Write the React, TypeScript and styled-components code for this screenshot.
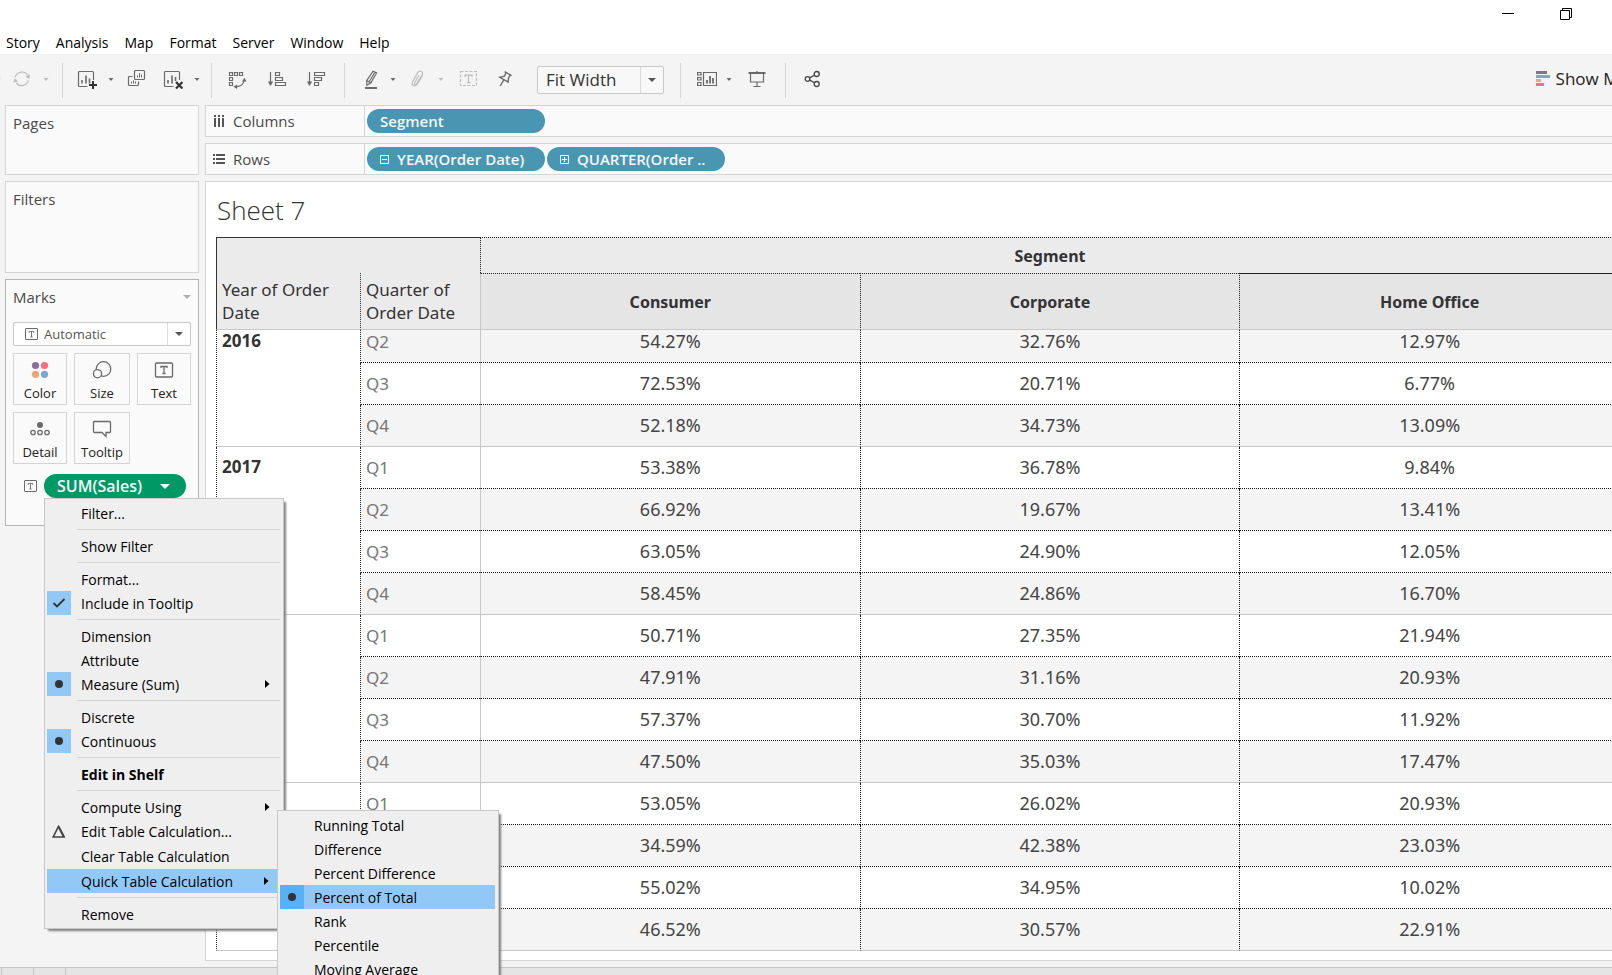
import React from 'react';
import styled, { createGlobalStyle, css } from 'styled-components';

const GlobalStyle = createGlobalStyle`
  *, *::before, *::after { box-sizing: border-box; }
  body { margin: 0; background: #f4f4f4; }
  button, select { font: inherit; color: inherit; }
  button { padding: 0; border: 0; background: none; cursor: default; }
`;

const line = '#d4d4d4';
const ink = '#6a6a6a';

const Shell = styled.div`
  display: flex;
  flex-direction: column;
  height: 100vh;
  overflow: hidden;
  background: #f4f4f4;
  font-family: 'Open Sans', 'Noto Sans', sans-serif;
  font-size: 14px;
  color: #000;
`;

/* ---------- window chrome ---------- */

const TitleBar = styled.header`
  display: flex;
  justify-content: flex-end;
  height: 30px;
  padding-right: 17px;
  background: #fff;
`;

const WindowButton = styled.button`
  display: grid;
  place-items: center;
  width: 58px;
  height: 28px;
`;

const MenuBar = styled.nav`
  display: flex;
  gap: 16px;
  height: 24px;
  padding-left: 6px;
  background: #fff;
  line-height: 26px;
`;

const MenuBarItem = styled.button`
  white-space: nowrap;
`;

/* ---------- toolbar ---------- */

const Toolbar = styled.div`
  display: flex;
  align-items: center;
  height: 51px;
  border-top: 1px solid #f0f0f0;
`;

const Tool = styled.button<{ $lead?: number; $muted?: boolean }>`
  flex: none;
  height: 20px;
  margin-bottom: 2px;
  margin-left: ${(p) => p.$lead ?? 16}px;
  color: ${(p) => (p.$muted ? '#bdbdbd' : ink)};
  svg { display: block; }
`;

const Divider = styled.span<{ $lead?: number }>`
  flex: none;
  width: 1px;
  height: 35px;
  margin-left: ${(p) => p.$lead ?? 18}px;
  background: ${line};
`;

const SelectBox = styled.span<{ $size: 'large' | 'small' }>`
  position: relative;
  display: flex;
  flex: none;
  align-items: center;
  border: 1px solid #c8c8c8;
  border-radius: 2px;
  ${(p) =>
    p.$size === 'large'
      ? css`
          width: 127px;
          height: 28px;
          margin-left: 22px;
          background: #f8f8f8;
          font-size: 17px;
          color: #333;
          select { padding: 0 0 2px 8px; }
        `
      : css`
          height: 24px;
          background: #fff;
          font-size: 13px;
          color: #555;
          select { padding-left: 30px; }
        `}
`;

const Select = styled.select`
  width: 100%;
  height: 100%;
  border: 0;
  outline: 0;
  background: transparent;
  appearance: none;
`;

const SelectArrow = styled.span`
  position: absolute;
  top: 0;
  right: 0;
  bottom: 0;
  display: grid;
  place-items: center;
  width: 23px;
  border-left: 1px solid #dcdcdc;
  color: #555;
  pointer-events: none;
`;

const SelectIcon = styled.span`
  position: absolute;
  left: 11px;
  display: grid;
  color: ${ink};
  pointer-events: none;
`;

const ShowMe = styled.button`
  display: flex;
  flex: none;
  align-items: center;
  gap: 6px;
  margin-bottom: 3px;
  margin-left: auto;
  margin-right: -16px;
  font-size: 17px;
  color: #222;
`;

/* ---------- workspace ---------- */

const Workspace = styled.div`
  display: flex;
  flex: 1;
  gap: 6px;
  min-height: 0;
  padding: 0 0 6px 5px;
`;

const Sidebar = styled.aside`
  display: flex;
  flex: none;
  flex-direction: column;
  gap: 6px;
  width: 194px;
`;

const Card = styled.section<{ $height: number; $strong?: boolean }>`
  min-height: ${(p) => p.$height}px;
  padding: 5px 7px 0;
  border: 1px solid ${(p) => (p.$strong ? '#b4b4b4' : line)};
  background: #fafafa;
`;

const CardTitle = styled.h2`
  display: flex;
  align-items: center;
  justify-content: space-between;
  margin: 0;
  font-size: 15px;
  font-weight: 400;
  line-height: 24px;
  color: #4a4a4a;
`;

const CardMenuButton = styled.button`
  padding: 8px;
  margin-right: -8px;
  color: #b0b0b0;
  svg { display: block; }
`;

const MarkControls = styled.div`
  display: flex;
  flex-direction: column;
  gap: 7px;
  margin-top: 13px;
`;

const MarkGrid = styled.div`
  display: grid;
  grid-template-columns: 54fr 56fr 54fr;
  gap: 7px;
`;

const MarkButton = styled.button`
  display: flex;
  flex-direction: column;
  align-items: center;
  height: 52px;
  padding-top: 6px;
  border: 1px solid ${line};
  background: #fafafa;
  font-size: 13px;
  line-height: 26px;
  color: #222;
  svg { flex: none; }
`;

const MarkShelf = styled.div`
  display: flex;
  align-items: center;
  gap: 7px;
  margin-top: 10px;
  padding-left: 11px;
  color: ${ink};
`;

const MarkPillSlot = styled.div`
  position: relative;
`;

const Pill = styled.button<{ $measure?: boolean }>`
  display: flex;
  align-items: center;
  gap: 8px;
  width: ${(p) => (p.$measure ? 142 : 178)}px;
  height: 24px;
  padding: 0 16px 0 13px;
  border-radius: 12px;
  background: ${(p) => (p.$measure ? '#009966' : '#4996b2')};
  font-size: ${(p) => (p.$measure ? 16 : 15)}px;
  font-weight: 600;
  line-height: 24px;
  white-space: nowrap;
  color: #f4f8fa;
  ${(p) => p.$measure && 'justify-content: space-between;'}
  svg { flex: none; }
`;

const Main = styled.main`
  display: flex;
  flex: 1;
  flex-direction: column;
  gap: 6px;
  min-width: 0;
`;

const Shelf = styled.section`
  display: flex;
  height: 32px;
  flex: none;
  border: 1px solid ${line};
  border-right: 0;
  background: #fafafa;
`;

const ShelfLabel = styled.h2`
  display: flex;
  align-items: center;
  gap: 8px;
  width: 159px;
  margin: 0;
  padding-left: 7px;
  border-right: 1px solid ${line};
  font-size: 15px;
  font-weight: 400;
  color: #4a4a4a;
`;

const PillRow = styled.div`
  display: flex;
  align-items: center;
  gap: 2px;
  padding-left: 2px;
`;

const Sheet = styled.section`
  flex: 1;
  overflow: hidden;
  padding-left: 10px;
  border: 1px solid ${line};
  border-right: 0;
  background: #fff;
`;

const SheetTitle = styled.h1`
  margin: 0;
  padding: 2px 0 0 1px;
  font-size: 26px;
  font-weight: 300;
  line-height: 53px;
  color: #333;
`;

/* ---------- crosstab ---------- */

const Crosstab = styled.table`
  width: calc(100% + 7px);
  border-spacing: 0;
  table-layout: fixed;
  font-family: 'Noto Sans', 'Open Sans', sans-serif;
  font-size: 17px;
  line-height: 23px;
  color: #333;
  th, td { padding: 0 5px; }
`;

const Col = styled.col<{ $width?: number }>`
  ${(p) => p.$width && `width: ${p.$width}px;`}
`;

const CornerTop = styled.td`
  height: 36px;
  border-top: 1px solid #333;
  border-left: 1px solid #333;
  background: #ebebeb;
`;

const SpanHead = styled.th`
  border-top: 1px dotted #222;
  border-left: 1px dotted #222;
  background: #ebebeb;
  font-size: 16px;
  && { padding-top: 2px; }
`;

const FieldHead = styled.th<{ $edge: 'solid' | 'dotted' }>`
  height: 57px;
  border-left: 1px ${(p) => p.$edge} #333;
  border-bottom: 1px solid #c8c8c8;
  background: #ebebeb;
  font-weight: 400;
  text-align: left;
  vertical-align: bottom;
  && { padding-bottom: 5px; }
`;

const MemberHead = styled.th<{ $first?: boolean; $last?: boolean }>`
  border-top: 1px ${(p) => (p.$last ? 'solid' : 'dotted')} #222;
  border-left: 1px ${(p) => (p.$first ? 'solid #c8c8c8' : 'dotted #222')};
  border-bottom: 1px solid #c8c8c8;
  background: #e5e5e5;
  font-size: 16px;
  && { padding-top: 2px; }
`;

const YearHead = styled.th<{ $clipped?: boolean }>`
  border-left: 1px dotted #222;
  border-bottom: 1px solid #c8c8c8;
  line-height: 21px;
  text-align: left;
  vertical-align: top;
  && { padding-top: ${(p) => (p.$clipped ? 0 : 9)}px; }
`;

const DataRow = styled.tr<{ $clipped?: boolean; $shaded?: boolean; $end?: boolean }>`
  height: ${(p) => (p.$clipped ? 33 : 42)}px;
  --shade: ${(p) => (p.$shaded ? '#f4f4f4' : '#fff')};
  --rule: ${(p) => (p.$end ? 'solid #c8c8c8' : 'dotted #111')};
  --lift: ${(p) => (p.$clipped ? 9 : 0)}px;
`;

const QuarterHead = styled.th`
  border-left: 1px dotted #222;
  border-bottom: 1px var(--rule);
  background: var(--shade);
  font-weight: 400;
  text-align: left;
  color: #757575;
  && { padding-bottom: var(--lift); }
`;

const Value = styled.td<{ $first?: boolean }>`
  border-left: 1px ${(p) => (p.$first ? 'solid #c8c8c8' : 'dotted #111')};
  border-bottom: 1px var(--rule);
  background: var(--shade);
  font-size: 18px;
  text-align: center;
  color: #444;
  && { padding-bottom: var(--lift); }
`;

/* ---------- context menus ---------- */

const Menu = styled.div<{ $nested?: boolean }>`
  position: absolute;
  z-index: ${(p) => (p.$nested ? 2 : 1)};
  top: ${(p) => (p.$nested ? '-59px' : '100%')};
  left: ${(p) => (p.$nested ? '230px' : '0')};
  width: ${(p) => (p.$nested ? 222 : 240)}px;
  padding: 2px;
  border: 1px solid #c8c8c8;
  background: #efefef;
  box-shadow: 3px 3px 2px -1px #808080;
  color: #000;
`;

const MenuItem = styled.div<{ $active?: boolean; $tall?: boolean; $strong?: boolean }>`
  position: relative;
  margin-right: ${(p) => (p.$active ? 1 : 0)}px;
  background: ${(p) => (p.$active ? '#91c8f6' : 'transparent')};
  > button {
    display: grid;
    grid-template-columns: 24px 1fr 16px;
    column-gap: 10px;
    align-items: center;
    width: 100%;
    height: ${(p) => (p.$tall ? 25 : 24)}px;
    text-align: left;
    white-space: nowrap;
    font-weight: ${(p) => (p.$strong ? 700 : 400)};
  }
`;

const Mark = styled.span<{ $tint?: 'on' | 'active' }>`
  display: grid;
  place-items: center;
  height: 24px;
  background: ${(p) => (p.$tint === 'active' ? '#56b0fa' : p.$tint === 'on' ? '#91c8f6' : 'transparent')};
  color: #333;
`;

const Separator = styled.hr`
  height: 1px;
  margin: 4px 1px 4px 30px;
  border: 0;
  background: ${line};
`;

/* ---------- status strip ---------- */

const TabStrip = styled.footer`
  display: flex;
  flex: none;
  height: 8px;
  padding-left: 1px;
  border-top: 1px solid #c4c4c4;
  background: #e5e5e5;
`;

const TabStub = styled.span`
  width: 32px;
  border-left: 1px solid #c4c4c4;
  &:last-child { width: 1px; }
`;

/* ---------- icons ---------- */

const Icon = ({ size = 20, children }: { size?: number; children: React.ReactNode }) => (
  <svg width={size} height={size} viewBox={`0 0 ${size} ${size}`} fill="none" stroke="currentColor" strokeWidth="1.2" aria-hidden="true">
    {children}
  </svg>
);

const Caret = ({ width = 8 }: { width?: number }) => (
  <svg width={width} height={width / 2} viewBox="0 0 8 4" fill="currentColor" aria-hidden="true">
    <path d="M0 0h8L4 4z" />
  </svg>
);

const ToolCaret = () => (
  <svg width="8" height="20" viewBox="0 0 8 20" fill="currentColor" aria-hidden="true">
    <path d="M1.500 9h5L4 12z" />
  </svg>
);

const SubmenuArrow = () => (
  <svg width="5" height="8" viewBox="0 0 5 8" aria-hidden="true">
    <path d="M0 0l4.500 4L0 8z" />
  </svg>
);

const Dot = () => (
  <svg width="8" height="8" viewBox="0 0 8 8" fill="#333" aria-hidden="true">
    <circle cx="4" cy="4" r="4" />
  </svg>
);

const Check = () => (
  <svg width="14" height="10" viewBox="0 0 14 10" fill="none" stroke="#333" strokeWidth="1.8" aria-hidden="true">
    <path d="M1.500 5l3.500 3.500L12.500 1" />
  </svg>
);

const Delta = () => (
  <svg width="14" height="14" viewBox="0 0 14 14" fill="none" stroke="#444" strokeWidth="1.6" aria-hidden="true">
    <path d="M6.500 1.500L12 12H1.200z" />
    <path d="M6.500 1.500L12 12" strokeWidth="2" />
  </svg>
);

const TextBox = () => (
  <svg width="13" height="12" viewBox="0 0 13 12" fill="none" stroke="currentColor" aria-hidden="true">
    <rect x=".5" y=".5" width="12" height="11" rx=".5" />
    <path d="M4.300 4.800V3.400h4.400v1.400M6.500 3.400V9M5.400 9h2.200" strokeWidth=".9" />
  </svg>
);

const Toggle = ({ plus }: { plus?: boolean }) => (
  <svg width="9" height="9" viewBox="0 0 9 9" fill="none" stroke="#fff" aria-hidden="true">
    <path d={plus ? 'M.5 .5h8v8h-8zM2 4.500h5M4.500 2v5' : 'M.5 .5h8v8h-8zM2 4.500h5'} />
  </svg>
);

const icons = {
  refresh: (
    <Icon>
      <path d="M3.200 8.200A7 7 0 0 1 15.800 6.200M16.400 11.400A7 7 0 0 1 4.200 14" />
      <path d="M17.800 5.200l-.4 4.800-4-2.400zM1.200 13.600l1.600-4.400 3.400 3.200z" fill="currentColor" stroke="none" />
    </Icon>
  ),
  newSheet: (
    <Icon>
      <path d="M10.500 17.500H2.500a1 1 0 0 1-1-1v-13a1 1 0 0 1 1-1h13a1 1 0 0 1 1 1V11" />
      <path d="M5 11v3.500M9 6.500v8M12.500 9.500v5" strokeWidth="1.6" />
      <path d="M16 12v8M12 16h8" stroke="#333" strokeWidth="2" />
    </Icon>
  ),
  duplicate: (
    <Icon>
      <rect x="7.500" y="1.500" width="10" height="9" rx="1" />
      <path d="M5.500 7.500h-3a1 1 0 0 0-1 1v7a1 1 0 0 0 1 1h8a1 1 0 0 0 1-1v-3" />
      <path d="M10.500 6.500v2M12.500 4v4.500M14.500 5.500v3M4.500 12.500v2M6.500 11.500v3M8.500 12.500v2" strokeWidth="1" />
    </Icon>
  ),
  clearSheet: (
    <Icon>
      <path d="M10.500 17.500H2.500a1 1 0 0 1-1-1v-13a1 1 0 0 1 1-1h13a1 1 0 0 1 1 1V11" />
      <path d="M5 11v3.500M9 6.500v8M12.500 8v4" strokeWidth="1.6" />
      <path d="M13 13l6.500 6.500M19.500 13L13 19.500" stroke="#333" strokeWidth="2.200" />
    </Icon>
  ),
  swap: (
    <Icon>
      <path d="M1.500 3.500h3v3h-3zM6.500 3.500h3v3h-3zM11.500 3.500h3v3h-3zM1.500 8.500h3v3h-3zM1.500 13.500h3v3h-3zM16 12c-.6 3-3.500 5.200-7 5.700" />
      <path d="M16.300 8.800l2.300 3.600h-4.600zM5.500 17.800l3.600-2.400v4.600z" fill="currentColor" stroke="none" />
    </Icon>
  ),
  sortUp: (
    <Icon>
      <path d="M3.500 3v11M8.500 3.500h4v3h-4zM8.500 8.500h7v3h-7zM8.500 13.500h10v3h-10z" />
      <path d="M.8 12.500h5.400L3.500 17z" fill="currentColor" stroke="none" />
    </Icon>
  ),
  sortDown: (
    <Icon>
      <path d="M3.500 3v11M8.500 3.500h10v3h-10zM8.500 8.500h7v3h-7zM8.500 13.500h4v3h-4z" />
      <path d="M.8 12.500h5.400L3.500 17z" fill="currentColor" stroke="none" />
    </Icon>
  ),
  highlight: (
    <Icon>
      <path d="M12 2.200l3.600 1.600L9.800 14l-3.900 2.200-.3-4.500zM5.800 11.600L9.800 14M13.800 3.200L8 13" />
      <path d="M4 19h12" strokeWidth="2" />
    </Icon>
  ),
  clip: (
    <Icon>
      <path d="M12 6l-4.500 8.200c-.8 1.600 1 2.500 1.800 1.100L15 6.400c1.200-2.200.3-3.600-.9-4.100-1.300-.5-2.700 0-3.500 1.500L5.800 12.400c-1 2-.5 3.700.6 4.300" />
      <path d="M6.400 16.700c1.600.8 3-.2 4-1.800l5.300-8.700" />
    </Icon>
  ),
  label: (
    <Icon>
      <rect x="1.500" y="2.500" width="16" height="14" strokeDasharray="3 1.500" />
      <path d="M6 8V6.200h7V8M9.500 6.200v7.500M7.700 13.700h3.600" />
    </Icon>
  ),
  pin: (
    <Icon>
      <path d="M9.600 2.600l7 4M11 3.600L9.500 7.200 4.800 8.300l8.400 4.900.3-4.200 2-3.200M8.800 10.800l-3.600 6.200" strokeWidth="1.400" />
    </Icon>
  ),
  cards: (
    <Icon>
      <path d="M.6 3.500h3.400v2.500H.6zM.6 8.500h3.400v2.500H.6zM.6 13.500h3.400v3H.6zM6.500 3.500h13v13h-13z" />
      <path d="M10 11v3.500M13 7v7.500M16 9v5.500" strokeWidth="1.800" />
    </Icon>
  ),
  present: (
    <Icon>
      <path d="M1.500 4h17" strokeWidth="2" />
      <path d="M3.500 4v9h13V4M10 2v1M10 13v5M6.500 17.500h7" />
    </Icon>
  ),
  share: (
    <Icon>
      <g stroke="#444" strokeWidth="1.300">
        <circle cx="5.500" cy="10" r="2.300" />
        <circle cx="14.700" cy="5" r="2.500" />
        <circle cx="14.700" cy="15" r="2.500" />
        <path d="M7.600 8.900l4.900-2.700M7.600 11.100l4.900 2.700" />
      </g>
    </Icon>
  ),
};

const MarkIcon = ({ name }: { name: string }) => (
  <svg width="20" height="20" viewBox="0 0 20 20" fill="none" stroke={ink} strokeWidth="1.300" aria-hidden="true">
    {name === 'Color' && (
      <g stroke="none">
        <circle cx="5.500" cy="5.500" r="3.600" fill="#86709a" />
        <circle cx="14.500" cy="5.500" r="3.600" fill="#fa6c80" />
        <circle cx="5.500" cy="14.300" r="3.600" fill="#f2a37a" />
        <circle cx="14.500" cy="14.300" r="3.600" fill="#82a4cc" />
      </g>
    )}
    {name === 'Size' && (
      <>
        <circle cx="11.500" cy="9" r="7.300" />
        <circle cx="5.500" cy="13.700" r="4.100" fill="#fafafa" />
      </>
    )}
    {name === 'Text' && (
      <>
        <rect x="1.500" y="3" width="17" height="14" rx="1" />
        <path d="M7 8V6.500h6V8M10 6.500v7M8.400 13.500h3.200" />
      </>
    )}
    {name === 'Detail' && (
      <>
        <circle cx="10" cy="6" r="3" fill={ink} stroke="none" />
        <circle cx="3" cy="13.500" r="2.200" />
        <circle cx="10" cy="13.500" r="2.200" />
        <circle cx="17" cy="13.500" r="2.200" />
      </>
    )}
    {name === 'Tooltip' && <path d="M2.500 2.500h15a1 1 0 0 1 1 1v9a1 1 0 0 1-1 1H14v4l-4-4H2.500a1 1 0 0 1-1-1v-9a1 1 0 0 1 1-1z" />}
  </svg>
);

/* ---------- data ---------- */

const menus = ['Story', 'Analysis', 'Map', 'Format', 'Server', 'Window', 'Help'];

const years = [
  { year: '2016', rows: [['Q2', '54.27%', '32.76%', '12.97%'], ['Q3', '72.53%', '20.71%', '6.77%'], ['Q4', '52.18%', '34.73%', '13.09%']] },
  { year: '2017', rows: [['Q1', '53.38%', '36.78%', '9.84%'], ['Q2', '66.92%', '19.67%', '13.41%'], ['Q3', '63.05%', '24.90%', '12.05%'], ['Q4', '58.45%', '24.86%', '16.70%']] },
  { year: '2018', rows: [['Q1', '50.71%', '27.35%', '21.94%'], ['Q2', '47.91%', '31.16%', '20.93%'], ['Q3', '57.37%', '30.70%', '11.92%'], ['Q4', '47.50%', '35.03%', '17.47%']] },
  { year: '2019', rows: [['Q1', '53.05%', '26.02%', '20.93%'], ['Q2', '34.59%', '42.38%', '23.03%'], ['Q3', '55.02%', '34.95%', '10.02%'], ['Q4', '46.52%', '30.57%', '22.91%']] },
];

type Entry = { text: string; mark?: 'check' | 'dot' | 'delta'; arrow?: boolean; tall?: boolean; strong?: boolean; open?: boolean };

const contextMenu: Entry[][] = [
  [{ text: 'Filter...' }],
  [{ text: 'Show Filter' }],
  [{ text: 'Format...' }, { text: 'Include in Tooltip', mark: 'check' }],
  [{ text: 'Dimension' }, { text: 'Attribute' }, { text: 'Measure (Sum)', mark: 'dot', arrow: true }],
  [{ text: 'Discrete' }, { text: 'Continuous', mark: 'dot' }],
  [{ text: 'Edit in Shelf', strong: true }],
  [
    { text: 'Compute Using', arrow: true },
    { text: 'Edit Table Calculation...', mark: 'delta', tall: true },
    { text: 'Clear Table Calculation', tall: true },
    { text: 'Quick Table Calculation', arrow: true, open: true },
  ],
  [{ text: 'Remove' }],
];

const calculations = ['Running Total', 'Difference', 'Percent Difference', 'Percent of Total', 'Rank', 'Percentile', 'Moving Average'];

const CalculationMenu = () => (
  <Menu $nested role="menu" aria-label="Quick Table Calculation">
    {calculations.map((text) => {
      const active = text === 'Percent of Total';
      return (
        <MenuItem key={text} $active={active}>
          <button role="menuitemradio" aria-checked={active}>
            <Mark $tint={active ? 'active' : undefined}>{active && <Dot />}</Mark>
            {text}
          </button>
        </MenuItem>
      );
    })}
  </Menu>
);

const ContextMenu = () => (
  <Menu role="menu" aria-label="SUM(Sales)">
    {contextMenu.map((group, index) => (
      <React.Fragment key={group[0].text}>
        {index > 0 && <Separator />}
        {group.map((item) => (
          <MenuItem key={item.text} $active={item.open} $tall={item.tall} $strong={item.strong}>
            <button role="menuitem">
              <Mark $tint={item.mark === 'check' || item.mark === 'dot' ? 'on' : undefined}>
                {item.mark === 'check' && <Check />}
                {item.mark === 'dot' && <Dot />}
                {item.mark === 'delta' && <Delta />}
              </Mark>
              <span>{item.text}</span>
              {item.arrow && <SubmenuArrow />}
            </button>
            {item.open && <CalculationMenu />}
          </MenuItem>
        ))}
      </React.Fragment>
    ))}
  </Menu>
);

const MainToolbar = () => (
  <Toolbar role="toolbar" aria-label="Main">
    <Tool $lead={-6} aria-label="Update options"><ToolCaret /></Tool>
    <Tool $lead={10} $muted aria-label="Refresh">{icons.refresh}</Tool>
    <Tool $lead={10} $muted aria-label="Refresh options"><ToolCaret /></Tool>
    <Divider $lead={12} />
    <Tool $lead={14} aria-label="New worksheet">{icons.newSheet}</Tool>
    <Tool $lead={10} aria-label="New worksheet options"><ToolCaret /></Tool>
    <Tool $lead={12} aria-label="Duplicate">{icons.duplicate}</Tool>
    <Tool aria-label="Clear sheet">{icons.clearSheet}</Tool>
    <Tool $lead={10} aria-label="Clear options"><ToolCaret /></Tool>
    <Divider $lead={10} />
    <Tool aria-label="Swap rows and columns">{icons.swap}</Tool>
    <Tool $lead={19} aria-label="Sort ascending">{icons.sortUp}</Tool>
    <Tool $lead={19} aria-label="Sort descending">{icons.sortDown}</Tool>
    <Divider />
    <Tool aria-label="Highlight">{icons.highlight}</Tool>
    <Tool $lead={8} aria-label="Highlight options"><ToolCaret /></Tool>
    <Tool $lead={10} $muted aria-label="Group members">{icons.clip}</Tool>
    <Tool $lead={10} $muted aria-label="Group options"><ToolCaret /></Tool>
    <Tool $lead={14} $muted aria-label="Show mark labels">{icons.label}</Tool>
    <Tool aria-label="Fix axes">{icons.pin}</Tool>
    <SelectBox $size="large">
      <Select aria-label="Fit" defaultValue="Fit Width">
        <option>Fit Width</option>
      </Select>
      <SelectArrow><Caret /></SelectArrow>
    </SelectBox>
    <Divider $lead={16} />
    <Tool aria-label="Show or hide cards">{icons.cards}</Tool>
    <Tool $lead={8} aria-label="Card options"><ToolCaret /></Tool>
    <Tool $lead={14} aria-label="Presentation mode">{icons.present}</Tool>
    <Divider />
    <Tool aria-label="Share">{icons.share}</Tool>
    <ShowMe>
      <svg width="14" height="15" viewBox="0 0 14 15" aria-hidden="true">
        <path fill="#86709a" d="M0 0h11v3H0z" />
        <path fill="#82a4cc" d="M0 4h14v3H0z" />
        <path fill="#f2a37a" d="M0 8h5v3H0z" />
        <path fill="#fa6c80" d="M0 12h8v3H0z" />
      </svg>
      Show Me
    </ShowMe>
  </Toolbar>
);

const SalesTable = () => (
  <Crosstab>
    <colgroup>
      <Col $width={144} />
      <Col $width={120} />
      <Col />
      <Col />
      <Col />
    </colgroup>
    <thead>
      <tr>
        <CornerTop colSpan={2} />
        <SpanHead colSpan={3}>Segment</SpanHead>
      </tr>
      <tr>
        <FieldHead $edge="solid">Year of Order Date</FieldHead>
        <FieldHead $edge="dotted">Quarter of Order Date</FieldHead>
        <MemberHead $first>Consumer</MemberHead>
        <MemberHead>Corporate</MemberHead>
        <MemberHead $last>Home Office</MemberHead>
      </tr>
    </thead>
    <tbody>
      {years.map(({ year, rows }, y) =>
        rows.map(([quarter, ...values], i) => (
          <DataRow key={year + quarter} $clipped={y === 0 && i === 0} $shaded={quarter === 'Q2' || quarter === 'Q4'} $end={i === rows.length - 1}>
            {i === 0 && <YearHead rowSpan={rows.length} $clipped={y === 0}>{year}</YearHead>}
            <QuarterHead>{quarter}</QuarterHead>
            {values.map((value, v) => (
              <Value key={v} $first={v === 0}>{value}</Value>
            ))}
          </DataRow>
        )),
      )}
    </tbody>
  </Crosstab>
);

export default function App() {
  return (
    <Shell>
      <GlobalStyle />
      <TitleBar>
        <WindowButton aria-label="Minimize">
          <svg width="12" height="12" stroke="#000" aria-hidden="true"><path d="M0 5.500h12" /></svg>
        </WindowButton>
        <WindowButton aria-label="Restore">
          <svg width="12" height="12" fill="none" stroke="#000" aria-hidden="true"><path d="M.5 2.500h9v9h-9zM2.500 2.500v-2h9v9h-2" /></svg>
        </WindowButton>
      </TitleBar>
      <MenuBar>
        {menus.map((name) => <MenuBarItem key={name}>{name}</MenuBarItem>)}
      </MenuBar>
      <MainToolbar />
      <Workspace>
        <Sidebar>
          <Card $height={70}><CardTitle>Pages</CardTitle></Card>
          <Card $height={92}><CardTitle>Filters</CardTitle></Card>
          <Card $height={247} $strong>
            <CardTitle>
              Marks
              <CardMenuButton aria-label="Marks menu"><Caret /></CardMenuButton>
            </CardTitle>
            <MarkControls>
              <SelectBox $size="small">
                <SelectIcon><TextBox /></SelectIcon>
                <Select aria-label="Mark type" defaultValue="Automatic">
                  <option>Automatic</option>
                </Select>
                <SelectArrow><Caret /></SelectArrow>
              </SelectBox>
              <MarkGrid>
                {['Color', 'Size', 'Text', 'Detail', 'Tooltip'].map((name) => (
                  <MarkButton key={name}>
                    <MarkIcon name={name} />
                    {name}
                  </MarkButton>
                ))}
              </MarkGrid>
            </MarkControls>
            <MarkShelf>
              <TextBox />
              <MarkPillSlot>
                <Pill $measure aria-haspopup="menu">
                  SUM(Sales)
                  <Caret width={10} />
                </Pill>
                <ContextMenu />
              </MarkPillSlot>
            </MarkShelf>
          </Card>
        </Sidebar>
        <Main>
          <Shelf>
            <ShelfLabel>
              <svg width="12" height="12" fill="#555" aria-hidden="true">
                <path d="M1 0h2v2H1zM5 0h2v2H5zM9 0h2v2H9zM1 3h2v9H1zM5 3h2v9H5zM9 3h2v9H9z" />
              </svg>
              Columns
            </ShelfLabel>
            <PillRow><Pill>Segment</Pill></PillRow>
          </Shelf>
          <Shelf>
            <ShelfLabel>
              <svg width="12" height="12" fill="#555" aria-hidden="true">
                <path d="M0 1h2v2H0zM0 5h2v2H0zM0 9h2v2H0zM3 1h9v2H3zM3 5h9v2H3zM3 9h9v2H3z" />
              </svg>
              Rows
            </ShelfLabel>
            <PillRow>
              <Pill><Toggle />YEAR(Order Date)</Pill>
              <Pill><Toggle plus />QUARTER(Order ..</Pill>
            </PillRow>
          </Shelf>
          <Sheet>
            <SheetTitle>Sheet 7</SheetTitle>
            <SalesTable />
          </Sheet>
        </Main>
      </Workspace>
      <TabStrip>
        <TabStub />
        <TabStub />
        <TabStub />
      </TabStrip>
    </Shell>
  );
}
